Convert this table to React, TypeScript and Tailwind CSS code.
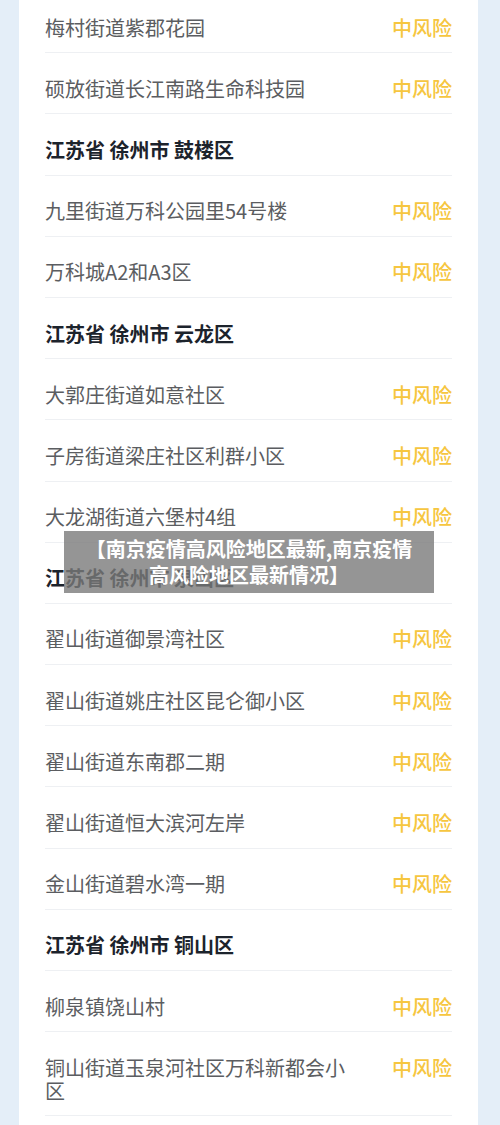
const FONT = '"Noto Sans CJK SC", "Noto Sans", sans-serif';

type Row = { kind: 'item'; name: string } | { kind: 'head'; name: string };

const rows: Row[] = [
  { kind: 'item', name: '梅村街道紫郡花园' },
  { kind: 'item', name: '硕放街道长江南路生命科技园' },
  { kind: 'head', name: '江苏省 徐州市 鼓楼区' },
  { kind: 'item', name: '九里街道万科公园里54号楼' },
  { kind: 'item', name: '万科城A2和A3区' },
  { kind: 'head', name: '江苏省 徐州市 云龙区' },
  { kind: 'item', name: '大郭庄街道如意社区' },
  { kind: 'item', name: '子房街道梁庄社区利群小区' },
  { kind: 'item', name: '大龙湖街道六堡村4组' },
  { kind: 'head', name: '江苏省 徐州市 泉山区' },
  { kind: 'item', name: '翟山街道御景湾社区' },
  { kind: 'item', name: '翟山街道姚庄社区昆仑御小区' },
  { kind: 'item', name: '翟山街道东南郡二期' },
  { kind: 'item', name: '翟山街道恒大滨河左岸' },
  { kind: 'item', name: '金山街道碧水湾一期' },
  { kind: 'head', name: '江苏省 徐州市 铜山区' },
  { kind: 'item', name: '柳泉镇饶山村' },
  { kind: 'item', name: '铜山街道玉泉河社区万科新都会小区' },
];

function RiskRow({ row }: { row: Row }) {
  if (row.kind === 'head') {
    return (
      <div className="pt-[23.6px] pb-[13.6px] border-b border-[#eef0f3]">
        <div className="text-[20px] leading-[23px] font-bold text-[#1c232c] whitespace-pre">{row.name}</div>
      </div>
    );
  }
  return (
    <div className="flex items-start pt-[23.6px] pb-[13.6px] border-b border-[#eef0f3]">
      <div className="flex-1 pr-10 text-[20px] leading-[23px] text-[#5b5d61]">{row.name}</div>
      <div className="text-[20px] leading-[23px] font-medium text-[#f6c640] whitespace-nowrap">中风险</div>
    </div>
  );
}

export default function App() {
  return (
    <main className="relative w-[500px] h-[1125px] overflow-hidden bg-[#e4eef8]" style={{ fontFamily: FONT }}>
      <div className="ml-[19px] mr-[22px] -mt-[8px] bg-white px-[26px] pb-10">
        {rows.map((r, i) => (
          <RiskRow key={i} row={r} />
        ))}
      </div>

      <div className="absolute left-[64px] top-[531px] w-[370px] h-[62px] bg-[#7a7a7a]/80 flex items-center justify-center">
        <p className="text-center text-white font-bold text-[20px] leading-[26px] px-2">
          【南京疫情高风险地区最新,南京疫情
          <br />
          高风险地区最新情况】
        </p>
      </div>
    </main>
  );
}
